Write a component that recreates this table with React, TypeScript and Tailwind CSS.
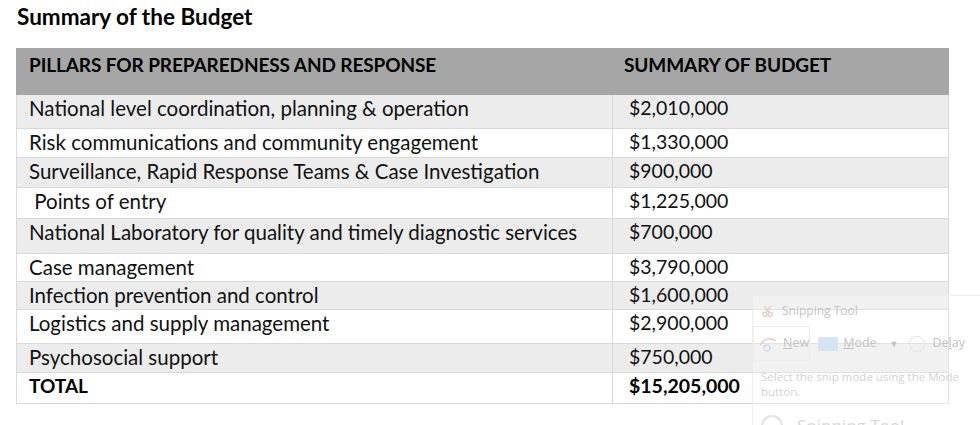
import React from 'react'

type Row = { pillar: string; amount: string; h: string; shade: boolean }

const rows: Row[] = [
  { pillar: 'National level coordination, planning & operation', amount: '$2,010,000', h: 'h-[34px]', shade: true },
  { pillar: 'Risk communications and community engagement', amount: '$1,330,000', h: 'h-[29px]', shade: false },
  { pillar: 'Surveillance, Rapid Response Teams & Case Investigation', amount: '$900,000', h: 'h-[30px]', shade: true },
  { pillar: '\u00a0Points of entry', amount: '$1,225,000', h: 'h-[31px]', shade: false },
  { pillar: 'National Laboratory for quality and timely diagnostic services', amount: '$700,000', h: 'h-[35px]', shade: true },
  { pillar: 'Case management', amount: '$3,790,000', h: 'h-[28px]', shade: false },
  { pillar: 'Infection prevention and control', amount: '$1,600,000', h: 'h-[28px]', shade: true },
  { pillar: 'Logistics and supply management', amount: '$2,900,000', h: 'h-[34px]', shade: false },
  { pillar: 'Psychosocial support', amount: '$750,000', h: 'h-[29px]', shade: true },
]

// faint ghost of a Snipping Tool window lying over the table
const SnipGhost: React.FC = () => (
  <div className="absolute left-[752px] top-[295px] w-[228px] h-[130px] border-l border-t border-[#e8e8e8]/70 bg-white/25 text-[#c2c2c2] font-['Segoe_UI','Open_Sans',sans-serif] pointer-events-none overflow-hidden">
    <div className="flex items-center gap-[8px] pl-[8px] h-[30px] text-[12px]">
      <svg width="13" height="13" viewBox="0 0 12 12" fill="none" stroke="#ecc4c4" strokeWidth="1.2">
        <circle cx="3.5" cy="8.5" r="2" /><circle cx="8.5" cy="8.5" r="2" /><path d="M4.5 6.8 L9 1 M7.5 6.8 L3 1" />
      </svg>
      Snipping Tool
    </div>
    <div className="flex items-center h-[35px] text-[12.5px]">
      <span className="flex items-center gap-[5px] w-[60px] h-[35px] border border-[#ececec] pl-[4px]">
        <svg width="20" height="18" viewBox="0 0 20 18" fill="none" stroke="#eec0c0" strokeWidth="1.3">
          <path d="M2 10 Q9 0 18 6" /><circle cx="9" cy="13" r="3" stroke="#cddcec" />
        </svg>
        <span><span className="underline">N</span>ew</span>
      </span>
      <span className="flex items-center ml-[8px] gap-[5px]">
        <span className="w-[20px] h-[14px] bg-[#d5e4f3]" />
        <span><span className="underline">M</span>ode</span>
        <span className="ml-[8px] text-[9px]">▼</span>
      </span>
      <span className="flex items-center ml-[10px] gap-[8px]">
        <span className="w-[16px] h-[16px] rounded-full border border-[#e2e2e2]" />
        <span>De<span className="underline">l</span>ay</span>
        <span className="ml-[6px] text-[9px]">▼</span>
      </span>
    </div>
    <div className="pl-[8px] pt-[8px] text-[11.5px] leading-[15px] text-[#d2d2d2]">
      Select the snip mode using the Mode
      <br />
      button.
    </div>
    <div className="flex items-center gap-[14px] pl-[8px] pt-[14px] text-[17px] text-[#d8d8d8]">
      <span className="w-[22px] h-[22px] rounded-full border-2 border-[#e2e2e2] border-b-transparent" />
      Snipping Tool
    </div>
  </div>
)

export default function App() {
  return (
    <div className="relative w-[980px] h-[425px] bg-white overflow-hidden font-['Lato',sans-serif] text-black">
      <h1 className="absolute left-[17px] top-[3px] text-[22.5px] font-bold leading-[28px]">Summary of the Budget</h1>
      <div className="pt-[48px] pl-[16px]">
        <table className="border-collapse w-[933px] table-fixed">
          <colgroup>
            <col className="w-[596px]" />
            <col />
          </colgroup>
          <thead>
            <tr className="h-[46px] bg-[#a6a6a6]">
              <th className="text-left align-top pt-[5px] pl-[12px] text-[19px] leading-[22px] font-bold tracking-[-0.1px] border border-[#a6a6a6]">
                PILLARS FOR PREPAREDNESS AND RESPONSE
              </th>
              <th className="text-left align-top pt-[5px] pl-[11px] text-[19px] leading-[22px] font-bold tracking-[-0.1px] border border-[#a6a6a6]">
                SUMMARY OF BUDGET
              </th>
            </tr>
          </thead>
          <tbody>
            {rows.map((r, i) => (
              <tr key={i} className={`${r.h} ${r.shade ? 'bg-[#ececec]' : 'bg-white'}`}>
                <td className="align-top pt-[1px] pl-[12px] text-[20.5px] leading-[24px] border border-[#d9d9d9] whitespace-pre text-[#111]">
                  {r.pillar}
                </td>
                <td className="align-top pt-[1px] pl-[16px] text-[19.5px] leading-[24px] border border-[#d9d9d9] text-[#111]">
                  {r.amount}
                </td>
              </tr>
            ))}
            <tr className="h-[31px] bg-white">
              <td className="align-top pt-[1px] pl-[12px] text-[19px] font-bold leading-[24px] border border-[#d9d9d9]">TOTAL</td>
              <td className="align-top pt-[1px] pl-[16px] text-[19.5px] font-bold leading-[24px] border border-[#d9d9d9]">$15,205,000</td>
            </tr>
          </tbody>
        </table>
      </div>
      <SnipGhost />
    </div>
  )
}
